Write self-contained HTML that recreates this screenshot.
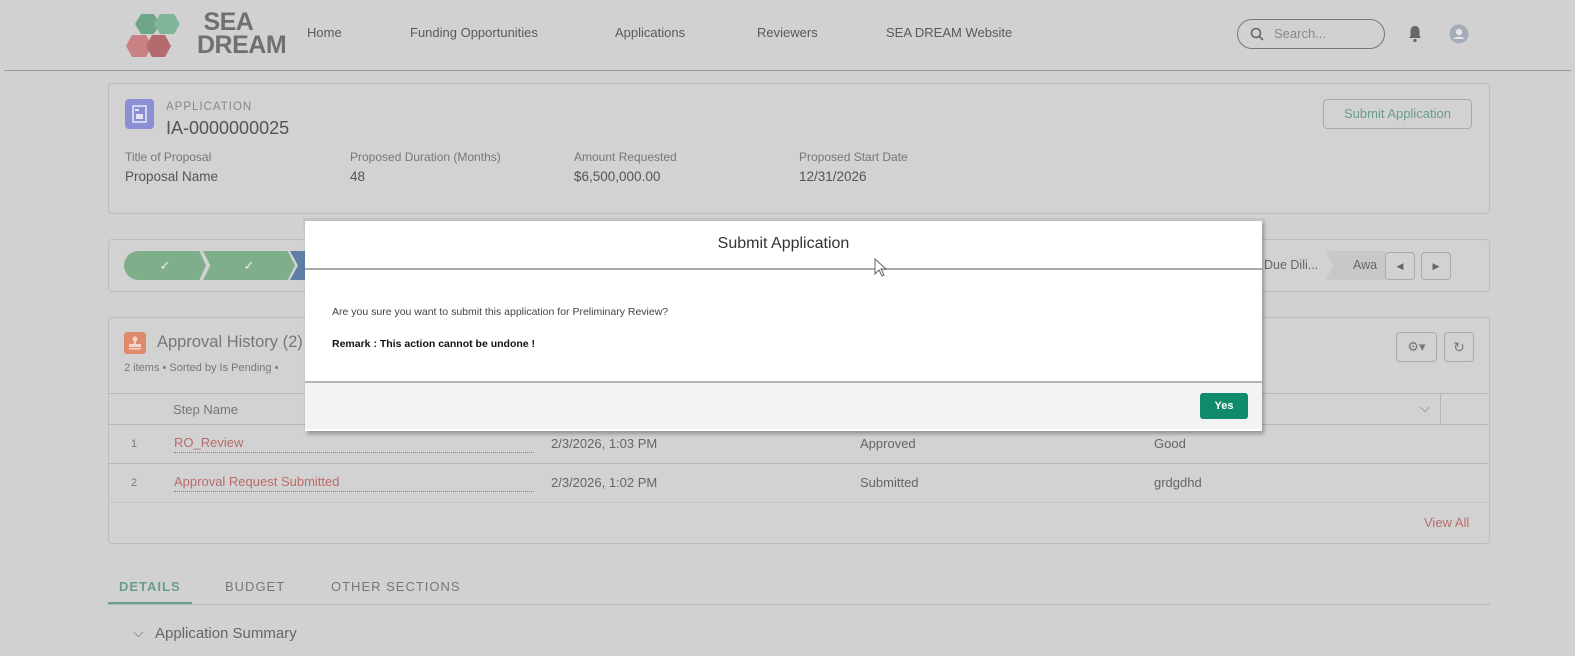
<!DOCTYPE html>
<html><head><style>
*{box-sizing:border-box;margin:0;padding:0}
body{width:1575px;height:656px;background:#d1d1d1;font-family:"Liberation Sans",sans-serif;color:#555;position:relative;overflow:hidden}
.a{position:absolute}
.card{position:absolute;border:1px solid #bdbdbd;border-radius:4px;background:#d2d2d2}
.nav{font-size:13px;color:#5a5a5a;top:25px}
.lbl{font-size:12px;color:#777}
.val{font-size:13.5px;color:#555}
.chev{position:absolute;top:251px;height:29px;background:#7fae8a;color:#eee;font-size:13px;text-align:center;line-height:29px}
td{font-size:13px}
</style></head><body>
<!-- logo -->
<svg class="a" style="left:124px;top:12px" width="74" height="46" viewBox="0 0 74 46">
<polygon points="17,2 30,2 36,12 30,22 17,22 11,12" fill="#6fa58b"/>
<polygon points="36,2 50,2 56,12 50,22 36,22 30,12" fill="#80b59a"/>
<polygon points="8,23 22,23 28,34 22,45 8,45 2,34" fill="#c98184"/>
<polygon points="28,23 41,23 47,34 41,45 28,45 22,34" fill="#b36b6e"/>
</svg>
<div class="a" style="left:197px;top:11px;font-size:25px;font-weight:bold;color:#707070;line-height:23px;letter-spacing:-0.5px">&nbsp;SEA<br>DREAM</div>
<div class="a nav" style="left:307px">Home</div>
<div class="a nav" style="left:410px">Funding Opportunities</div>
<div class="a nav" style="left:615px">Applications</div>
<div class="a nav" style="left:757px">Reviewers</div>
<div class="a nav" style="left:886px">SEA DREAM Website</div>
<div class="a" style="left:1237px;top:19px;width:148px;height:30px;border:1px solid #777;border-radius:15px"></div>
<svg class="a" style="left:1250px;top:27px" width="14" height="14"><circle cx="6" cy="6" r="4.5" stroke="#666" stroke-width="1.6" fill="none"/><line x1="9.5" y1="9.5" x2="13" y2="13" stroke="#666" stroke-width="1.6"/></svg>
<div class="a" style="left:1274px;top:26px;font-size:13px;color:#888">Search...</div>
<svg class="a" style="left:1407px;top:25px" width="16" height="18"><path d="M8 1C5 1 3.5 3.5 3.5 6v5L2 13h12l-1.5-2V6C12.5 3.5 11 1 8 1z" fill="#666"/><circle cx="8" cy="15.5" r="1.6" fill="#666"/></svg>
<svg class="a" style="left:1449px;top:24px" width="20" height="20"><circle cx="10" cy="10" r="9.5" fill="#a3acb7"/><circle cx="10" cy="8" r="3.2" fill="#e5e5e5"/><path d="M4.5 15c1-3 10-3 11 0z" fill="#e5e5e5"/></svg>
<div class="a" style="left:4px;top:70px;width:1567px;height:1px;background:#999"></div>

<!-- header card -->
<div class="card" style="left:108px;top:83px;width:1382px;height:131px"></div>
<div class="a" style="left:125px;top:99px;width:29px;height:30px;background:#8b8fd4;border-radius:4px"></div>
<svg class="a" style="left:130px;top:104px" width="19" height="20"><rect x="3" y="2" width="13" height="16" fill="none" stroke="#e4e4f6" stroke-width="1.6"/><rect x="6" y="10" width="7" height="5" fill="#e4e4f6"/><rect x="5" y="5" width="4" height="2" fill="#e4e4f6"/></svg>
<div class="a" style="left:166px;top:101px;font-size:11.5px;letter-spacing:1px;color:#888">APPLICATION</div>
<div class="a" style="left:166px;top:118px;font-size:18px;color:#555">IA-0000000025</div>
<div class="a lbl" style="left:125px;top:150px">Title of Proposal</div>
<div class="a val" style="left:125px;top:169px">Proposal Name</div>
<div class="a lbl" style="left:350px;top:150px">Proposed Duration (Months)</div>
<div class="a val" style="left:350px;top:169px">48</div>
<div class="a lbl" style="left:574px;top:150px">Amount Requested</div>
<div class="a val" style="left:574px;top:169px">$6,500,000.00</div>
<div class="a lbl" style="left:799px;top:150px">Proposed Start Date</div>
<div class="a val" style="left:799px;top:169px">12/31/2026</div>
<div class="a" style="left:1323px;top:99px;width:149px;height:30px;border:1px solid #aaa;border-radius:4px;font-size:13px;color:#6a9f87;text-align:center;line-height:28px">Submit Application</div>

<!-- path card -->
<div class="card" style="left:108px;top:239px;width:1382px;height:53px"></div>
<div class="chev" style="left:124px;width:82px;border-radius:15px 0 0 15px;clip-path:polygon(0 0,92% 0,100% 50%,92% 100%,0 100%)">✓</div>
<div class="chev" style="left:203px;width:92px;clip-path:polygon(0 0,92% 0,100% 50%,92% 100%,0 100%,8% 50%)">✓</div>
<div class="chev" style="left:290px;width:20px;background:#5d7fa6;clip-path:polygon(0 0,100% 0,100% 100%,0 100%,40% 50%)"></div>
<div class="a" style="left:1264px;top:258px;font-size:12.5px;color:#666">Due Dili...</div>
<div class="a" style="left:1326px;top:251px;width:60px;height:29px;background:#c8c8c8;clip-path:polygon(0 0,100% 0,100% 100%,0 100%,12% 50%)"></div>
<div class="a" style="left:1353px;top:258px;font-size:12.5px;color:#666">Awa</div>
<div class="a" style="left:1385px;top:252px;width:30px;height:28px;border:1px solid #aaa;border-radius:4px;text-align:center;line-height:26px;font-size:9px;color:#666">◀</div>
<div class="a" style="left:1421px;top:252px;width:30px;height:28px;border:1px solid #aaa;border-radius:4px;text-align:center;line-height:26px;font-size:9px;color:#666">▶</div>

<!-- approval card -->
<div class="card" style="left:108px;top:317px;width:1382px;height:227px"></div>
<div class="a" style="left:124px;top:332px;width:22px;height:22px;background:#df8a6a;border-radius:3px"></div>
<svg class="a" style="left:127px;top:335px" width="16" height="16"><circle cx="8" cy="4" r="2.5" fill="#f3d6cb"/><rect x="7" y="5" width="2" height="5" fill="#f3d6cb"/><rect x="2" y="9" width="12" height="3" fill="#f3d6cb"/><rect x="2" y="13" width="12" height="1.5" fill="#f3d6cb"/></svg>
<div class="a" style="left:157px;top:333px;font-size:16.5px;color:#777">Approval History (2)</div>
<div class="a" style="left:124px;top:362px;font-size:11px;color:#777">2 items • Sorted by Is Pending •</div>
<div class="a" style="left:1396px;top:332px;width:41px;height:30px;border:1px solid #aaa;border-radius:4px;text-align:center;line-height:28px;font-size:13px;color:#777">⚙▾</div>
<div class="a" style="left:1444px;top:332px;width:30px;height:30px;border:1px solid #aaa;border-radius:4px;text-align:center;line-height:28px;font-size:14px;color:#777">↻</div>
<div class="a" style="left:109px;top:393px;width:1380px;height:1px;background:#b5b5b5"></div>
<div class="a" style="left:109px;top:424px;width:1380px;height:1px;background:#b5b5b5"></div>
<div class="a" style="left:109px;top:463px;width:1380px;height:1px;background:#b5b5b5"></div>
<div class="a" style="left:109px;top:502px;width:1380px;height:1px;background:#c5c5c5"></div>
<div class="a" style="left:1440px;top:394px;width:1px;height:30px;background:#b5b5b5"></div>
<div class="a" style="left:173px;top:402px;font-size:13px;color:#777">Step Name</div>
<div class="a" style="left:1420px;top:400px;font-size:13px;color:#777">⌵</div>
<div class="a" style="left:131px;top:438px;font-size:11px;color:#777">1</div>
<div class="a" style="left:174px;top:435px;font-size:13px;color:#b96b6b;width:360px;border-bottom:1px dotted #b96b6b;padding-bottom:2px">RO_Review</div>
<div class="a" style="left:551px;top:436px;font-size:13px;color:#666">2/3/2026, 1:03 PM</div>
<div class="a" style="left:860px;top:436px;font-size:13px;color:#666">Approved</div>
<div class="a" style="left:1154px;top:436px;font-size:13px;color:#666">Good</div>
<div class="a" style="left:131px;top:477px;font-size:11px;color:#777">2</div>
<div class="a" style="left:174px;top:474px;font-size:13px;color:#b96b6b;width:360px;border-bottom:1px dotted #b96b6b;padding-bottom:2px">Approval Request Submitted</div>
<div class="a" style="left:551px;top:475px;font-size:13px;color:#666">2/3/2026, 1:02 PM</div>
<div class="a" style="left:860px;top:475px;font-size:13px;color:#666">Submitted</div>
<div class="a" style="left:1154px;top:475px;font-size:13px;color:#666">grdgdhd</div>
<div class="a" style="left:1424px;top:515px;font-size:13px;color:#b96b6b">View All</div>

<!-- tabs -->
<div class="a" style="left:119px;top:579px;font-size:13px;letter-spacing:1px;color:#6a9f87;font-weight:bold">DETAILS</div>
<div class="a" style="left:108px;top:602px;width:84px;height:3px;background:#6a9f87"></div>
<div class="a" style="left:225px;top:579px;font-size:13px;letter-spacing:1px;color:#777">BUDGET</div>
<div class="a" style="left:331px;top:579px;font-size:13px;letter-spacing:1px;color:#777">OTHER SECTIONS</div>
<div class="a" style="left:108px;top:604px;width:1382px;height:1px;background:#b5b5b5"></div>
<div class="a" style="left:133px;top:624px;font-size:14px;color:#777">⌵</div>
<div class="a" style="left:155px;top:625px;font-size:15px;color:#666">Application Summary</div>

<!-- modal -->
<div class="a" style="left:303px;top:218px;width:962px;height:8px;background:#c4c4c4"></div>
<div class="a" style="left:305px;top:221px;width:957px;height:210px;background:#fff;box-shadow:2px 3px 4px rgba(0,0,0,.3)"></div>
<div class="a" style="left:305px;top:235px;width:957px;text-align:center;font-size:16px;color:#333">Submit Application</div>
<div class="a" style="left:305px;top:268px;width:957px;height:2px;background:#aaa"></div>
<div class="a" style="left:332px;top:306px;font-size:10.5px;color:#444">Are you sure you want to submit this application for Preliminary Review?</div>
<div class="a" style="left:332px;top:338px;font-size:10.5px;color:#111;font-weight:bold">Remark : This action cannot be undone !</div>
<div class="a" style="left:305px;top:381px;width:957px;height:48px;background:#f3f3f3;border-top:2px solid #b5b5b5"></div>
<div class="a" style="left:1200px;top:393px;width:48px;height:26px;background:#0f8a6a;border-radius:3px;color:#fff;font-size:11px;font-weight:bold;text-align:center;line-height:26px">Yes</div>
<svg class="a" style="left:874px;top:258px" width="14" height="20"><path d="M1 1v15l4-4 3 6 2-1-3-6h5z" fill="#fff" stroke="#666" stroke-width="1"/></svg>
</body></html>
